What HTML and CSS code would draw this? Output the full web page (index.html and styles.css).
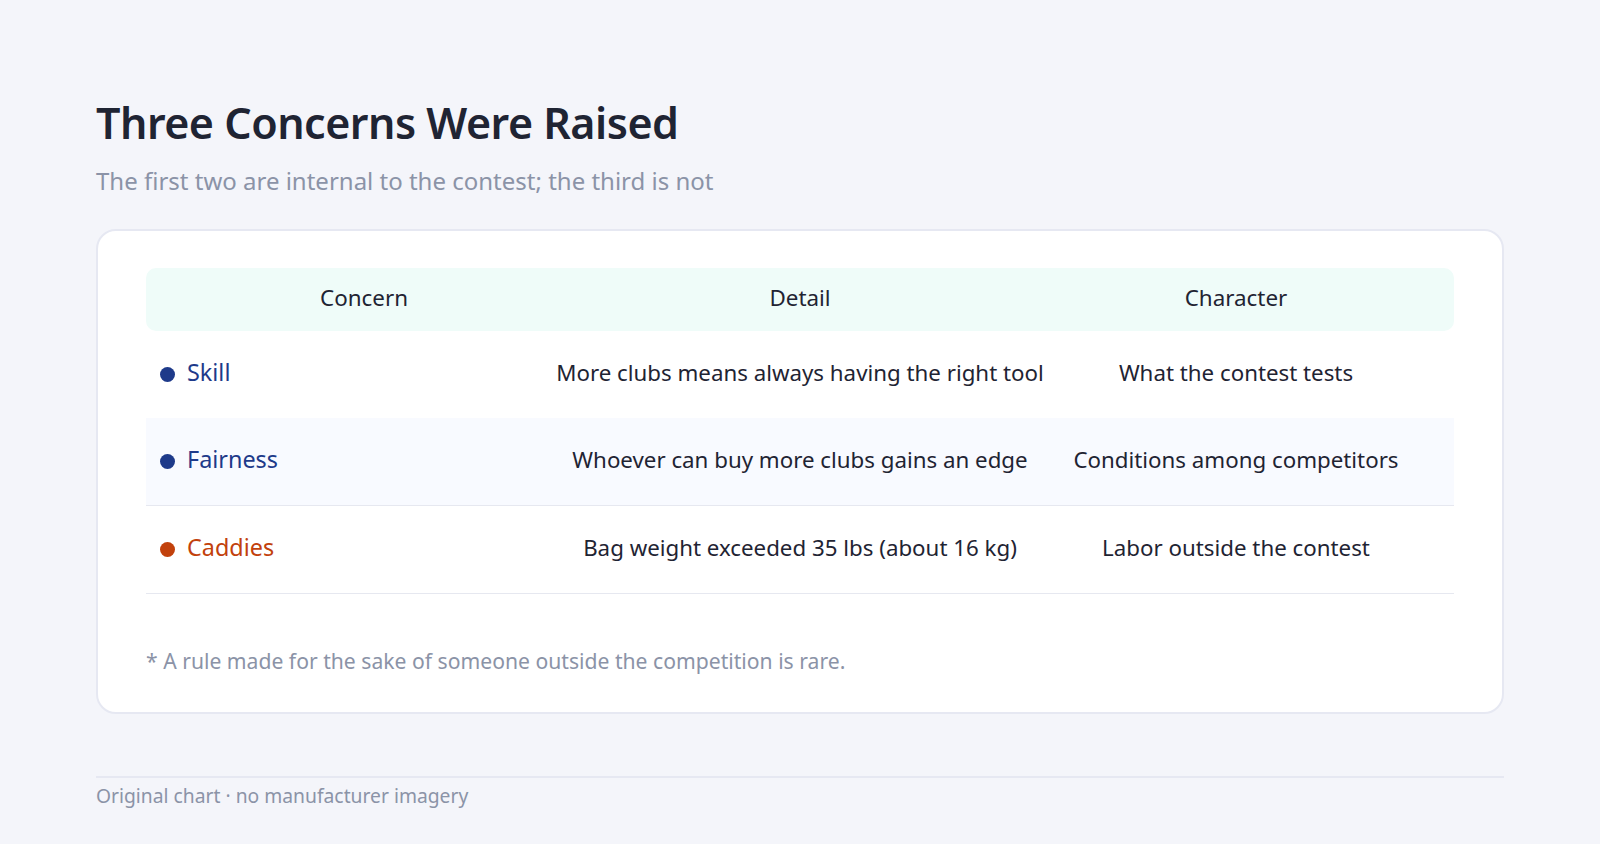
FILE: index.html
```html
<!DOCTYPE html>
<html lang="en">
<head>
<meta charset="utf-8">
<title>Three Concerns Were Raised</title>
<link rel="stylesheet" href="styles.css">
</head>
<body>
<main class="page">
  <header class="head">
    <h1 class="title">Three Concerns Were Raised</h1>
    <p class="subtitle">The first two are internal to the contest; the third is not</p>
  </header>
  <section class="card">
    <div class="table">
      <div class="row row-head">
        <div class="cell">Concern</div>
        <div class="cell">Detail</div>
        <div class="cell">Character</div>
      </div>
      <div class="row row-body">
        <div class="cell cell-name name-blue"><span class="dot"></span>Skill</div>
        <div class="cell">More clubs means always having the right tool</div>
        <div class="cell">What the contest tests</div>
      </div>
      <div class="row row-body row-alt row-line">
        <div class="cell cell-name name-blue"><span class="dot"></span>Fairness</div>
        <div class="cell">Whoever can buy more clubs gains an edge</div>
        <div class="cell">Conditions among competitors</div>
      </div>
      <div class="row row-body row-line">
        <div class="cell cell-name name-orange"><span class="dot"></span>Caddies</div>
        <div class="cell">Bag weight exceeded 35 lbs (about 16 kg)</div>
        <div class="cell">Labor outside the contest</div>
      </div>
    </div>
    <p class="note">* A rule made for the sake of someone outside the competition is rare.</p>
  </section>
  <footer class="foot">Original chart · no manufacturer imagery</footer>
</main>
</body>
</html>
```
FILE: styles.css
```css
* { box-sizing: border-box; }
html, body { margin: 0; padding: 0; }
body {
  background: #f4f5fa;
  font-family: "Noto Sans", "Open Sans", sans-serif;
  color: #1f2433;
  width: 1600px;
  height: 844px;
  overflow: hidden;
}
.page {
  padding: 95px 96px 0 96px;
}
.title {
  margin: 0;
  font-size: 43px;
  font-weight: 600;
  line-height: 56px;
  color: #1f2433;
  letter-spacing: -0.5px;
}
.subtitle {
  margin: 14px 0 0 0;
  font-size: 24px;
  line-height: 32px;
  color: #8b93a7;
}
.card {
  margin-top: 32px;
  background: #ffffff;
  border: 2px solid #e6e8f2;
  border-radius: 20px;
  padding: 37px 48px 37px 48px;
}
.table {
  display: flex;
  flex-direction: column;
}
.row {
  display: grid;
  grid-template-columns: repeat(3, minmax(0, 1fr));
  align-items: stretch;
  white-space: nowrap;
  padding-bottom: 5px;
}
.cell {
  display: flex;
  align-items: center;
  justify-content: center;
}
.row-head {
  height: 63px;
  background: #effcf9;
  border-radius: 10px;
  font-size: 22.4px;
}
.row-body {
  height: 87px;
  font-size: 22.3px;
}
.row-alt { background: #f8faff; }
.row-line {
  border-bottom: 1px solid #e6e8f0;
  height: 88px;
}
.row-body .cell-name {
  justify-content: flex-start;
  padding-left: 14px;
  font-size: 23.4px;
}
.dot {
  width: 15px;
  height: 15px;
  border-radius: 50%;
  margin-right: 12px;
  margin-top: 5px;
  background: currentColor;
  flex: none;
}
.name-blue { color: #1e3a8a; }
.name-orange { color: #c2410c; }
.note {
  margin: 53px 0 0 0;
  font-size: 21.15px;
  line-height: 28px;
  color: #8b93a7;
}
.foot {
  margin-top: 62px;
  border-top: 2px solid #e6e8f2;
  padding-top: 5px;
  font-size: 19.3px;
  line-height: 26px;
  color: #8b93a7;
}
```
